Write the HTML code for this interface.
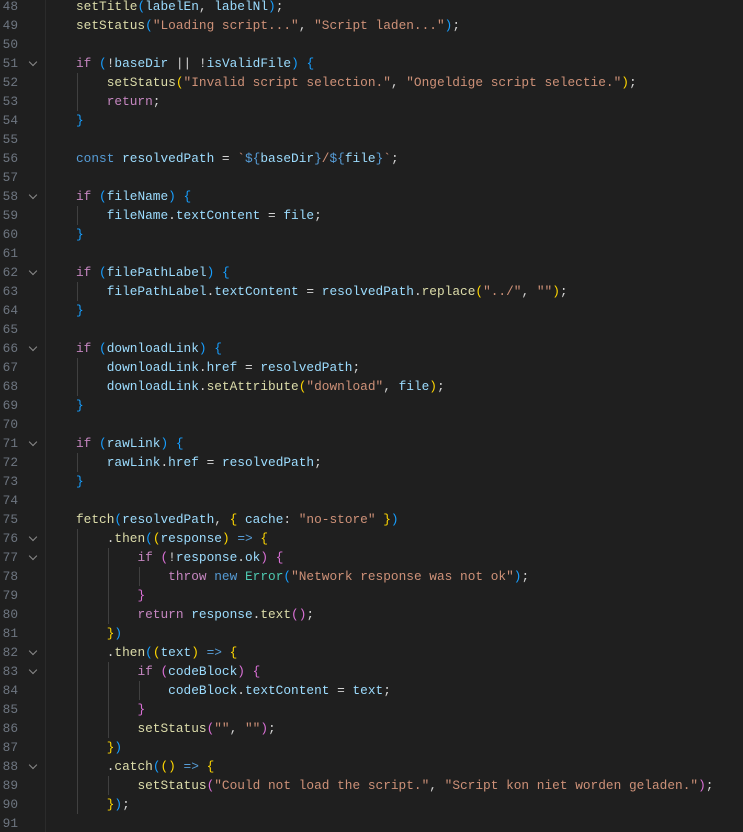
<!DOCTYPE html>
<html><head><style>
html,body{margin:0;padding:0;background:#1f1f1f;width:743px;height:832px;overflow:hidden}
body{font-family:"Liberation Mono",monospace;font-size:12.8px;color:#d4d4d4;position:relative}
.ln{position:absolute;left:0;width:18px;text-align:right;color:#6e7681;height:19px;line-height:19px}
.c{position:absolute;left:76px;white-space:pre;height:19px;line-height:19px}
.ch{position:absolute;left:30px;width:5px;height:5px;border-right:1.2px solid #8b8b8b;border-bottom:1.2px solid #8b8b8b;transform:rotate(45deg)}
.g{position:absolute;width:1px;background:#404040}
.sep{position:absolute;left:45px;top:0;width:1px;height:832px;background:#2b2b2b}
.f{color:#dcdcaa}.v{color:#9cdcfe}.s{color:#ce9178}.k{color:#c586c0}.b{color:#569cd6}.t{color:#4ec9b0}
.y{color:#ffd700}.p{color:#da70d6}.u{color:#179fff}
</style></head><body>
<div class="sep"></div>
<div class="g" style="left:77px;top:73px;height:38px"></div>
<div class="g" style="left:77px;top:206px;height:19px"></div>
<div class="g" style="left:77px;top:282px;height:19px"></div>
<div class="g" style="left:77px;top:358px;height:38px"></div>
<div class="g" style="left:77px;top:453px;height:19px"></div>
<div class="g" style="left:77px;top:529px;height:285px"></div>
<div class="g" style="left:108px;top:548px;height:76px"></div>
<div class="g" style="left:139px;top:567px;height:19px"></div>
<div class="g" style="left:108px;top:662px;height:76px"></div>
<div class="g" style="left:139px;top:681px;height:19px"></div>
<div class="g" style="left:108px;top:776px;height:19px"></div>

<div class="ln" style="top:-3px">48</div><div class="c" style="top:-3px"><span class="f">setTitle</span><span class="u">(</span><span class="v">labelEn</span>, <span class="v">labelNl</span><span class="u">)</span>;</div>
<div class="ln" style="top:16px">49</div><div class="c" style="top:16px"><span class="f">setStatus</span><span class="u">(</span><span class="s">"Loading script..."</span>, <span class="s">"Script laden..."</span><span class="u">)</span>;</div>
<div class="ln" style="top:35px">50</div>
<div class="ln" style="top:54px">51</div><div class="ch" style="top:59px"></div><div class="c" style="top:54px"><span class="k">if</span> <span class="u">(</span>!<span class="v">baseDir</span> || !<span class="v">isValidFile</span><span class="u">)</span> <span class="u">{</span></div>
<div class="ln" style="top:73px">52</div><div class="c" style="top:73px">    <span class="f">setStatus</span><span class="y">(</span><span class="s">"Invalid script selection."</span>, <span class="s">"Ongeldige script selectie."</span><span class="y">)</span>;</div>
<div class="ln" style="top:92px">53</div><div class="c" style="top:92px">    <span class="k">return</span>;</div>
<div class="ln" style="top:111px">54</div><div class="c" style="top:111px"><span class="u">}</span></div>
<div class="ln" style="top:130px">55</div>
<div class="ln" style="top:149px">56</div><div class="c" style="top:149px"><span class="b">const</span> <span class="v">resolvedPath</span> = <span class="s">`</span><span class="b">${</span><span class="v">baseDir</span><span class="b">}</span><span class="s">/</span><span class="b">${</span><span class="v">file</span><span class="b">}</span><span class="s">`</span>;</div>
<div class="ln" style="top:168px">57</div>
<div class="ln" style="top:187px">58</div><div class="ch" style="top:192px"></div><div class="c" style="top:187px"><span class="k">if</span> <span class="u">(</span><span class="v">fileName</span><span class="u">)</span> <span class="u">{</span></div>
<div class="ln" style="top:206px">59</div><div class="c" style="top:206px">    <span class="v">fileName</span>.<span class="v">textContent</span> = <span class="v">file</span>;</div>
<div class="ln" style="top:225px">60</div><div class="c" style="top:225px"><span class="u">}</span></div>
<div class="ln" style="top:244px">61</div>
<div class="ln" style="top:263px">62</div><div class="ch" style="top:268px"></div><div class="c" style="top:263px"><span class="k">if</span> <span class="u">(</span><span class="v">filePathLabel</span><span class="u">)</span> <span class="u">{</span></div>
<div class="ln" style="top:282px">63</div><div class="c" style="top:282px">    <span class="v">filePathLabel</span>.<span class="v">textContent</span> = <span class="v">resolvedPath</span>.<span class="f">replace</span><span class="y">(</span><span class="s">"../"</span>, <span class="s">""</span><span class="y">)</span>;</div>
<div class="ln" style="top:301px">64</div><div class="c" style="top:301px"><span class="u">}</span></div>
<div class="ln" style="top:320px">65</div>
<div class="ln" style="top:339px">66</div><div class="ch" style="top:344px"></div><div class="c" style="top:339px"><span class="k">if</span> <span class="u">(</span><span class="v">downloadLink</span><span class="u">)</span> <span class="u">{</span></div>
<div class="ln" style="top:358px">67</div><div class="c" style="top:358px">    <span class="v">downloadLink</span>.<span class="v">href</span> = <span class="v">resolvedPath</span>;</div>
<div class="ln" style="top:377px">68</div><div class="c" style="top:377px">    <span class="v">downloadLink</span>.<span class="f">setAttribute</span><span class="y">(</span><span class="s">"download"</span>, <span class="v">file</span><span class="y">)</span>;</div>
<div class="ln" style="top:396px">69</div><div class="c" style="top:396px"><span class="u">}</span></div>
<div class="ln" style="top:415px">70</div>
<div class="ln" style="top:434px">71</div><div class="ch" style="top:439px"></div><div class="c" style="top:434px"><span class="k">if</span> <span class="u">(</span><span class="v">rawLink</span><span class="u">)</span> <span class="u">{</span></div>
<div class="ln" style="top:453px">72</div><div class="c" style="top:453px">    <span class="v">rawLink</span>.<span class="v">href</span> = <span class="v">resolvedPath</span>;</div>
<div class="ln" style="top:472px">73</div><div class="c" style="top:472px"><span class="u">}</span></div>
<div class="ln" style="top:491px">74</div>
<div class="ln" style="top:510px">75</div><div class="c" style="top:510px"><span class="f">fetch</span><span class="u">(</span><span class="v">resolvedPath</span>, <span class="y">{</span> <span class="v">cache</span>: <span class="s">"no-store"</span> <span class="y">}</span><span class="u">)</span></div>
<div class="ln" style="top:529px">76</div><div class="ch" style="top:534px"></div><div class="c" style="top:529px">    .<span class="f">then</span><span class="u">(</span><span class="y">(</span><span class="v">response</span><span class="y">)</span> <span class="b">=&gt;</span> <span class="y">{</span></div>
<div class="ln" style="top:548px">77</div><div class="ch" style="top:553px"></div><div class="c" style="top:548px">        <span class="k">if</span> <span class="p">(</span>!<span class="v">response</span>.<span class="v">ok</span><span class="p">)</span> <span class="p">{</span></div>
<div class="ln" style="top:567px">78</div><div class="c" style="top:567px">            <span class="k">throw</span> <span class="b">new</span> <span class="t">Error</span><span class="u">(</span><span class="s">"Network response was not ok"</span><span class="u">)</span>;</div>
<div class="ln" style="top:586px">79</div><div class="c" style="top:586px">        <span class="p">}</span></div>
<div class="ln" style="top:605px">80</div><div class="c" style="top:605px">        <span class="k">return</span> <span class="v">response</span>.<span class="f">text</span><span class="p">()</span>;</div>
<div class="ln" style="top:624px">81</div><div class="c" style="top:624px">    <span class="y">}</span><span class="u">)</span></div>
<div class="ln" style="top:643px">82</div><div class="ch" style="top:648px"></div><div class="c" style="top:643px">    .<span class="f">then</span><span class="u">(</span><span class="y">(</span><span class="v">text</span><span class="y">)</span> <span class="b">=&gt;</span> <span class="y">{</span></div>
<div class="ln" style="top:662px">83</div><div class="ch" style="top:667px"></div><div class="c" style="top:662px">        <span class="k">if</span> <span class="p">(</span><span class="v">codeBlock</span><span class="p">)</span> <span class="p">{</span></div>
<div class="ln" style="top:681px">84</div><div class="c" style="top:681px">            <span class="v">codeBlock</span>.<span class="v">textContent</span> = <span class="v">text</span>;</div>
<div class="ln" style="top:700px">85</div><div class="c" style="top:700px">        <span class="p">}</span></div>
<div class="ln" style="top:719px">86</div><div class="c" style="top:719px">        <span class="f">setStatus</span><span class="p">(</span><span class="s">""</span>, <span class="s">""</span><span class="p">)</span>;</div>
<div class="ln" style="top:738px">87</div><div class="c" style="top:738px">    <span class="y">}</span><span class="u">)</span></div>
<div class="ln" style="top:757px">88</div><div class="ch" style="top:762px"></div><div class="c" style="top:757px">    .<span class="f">catch</span><span class="u">(</span><span class="y">()</span> <span class="b">=&gt;</span> <span class="y">{</span></div>
<div class="ln" style="top:776px">89</div><div class="c" style="top:776px">        <span class="f">setStatus</span><span class="p">(</span><span class="s">"Could not load the script."</span>, <span class="s">"Script kon niet worden geladen."</span><span class="p">)</span>;</div>
<div class="ln" style="top:795px">90</div><div class="c" style="top:795px">    <span class="y">}</span><span class="u">)</span>;</div>
<div class="ln" style="top:814px">91</div>
</body></html>
